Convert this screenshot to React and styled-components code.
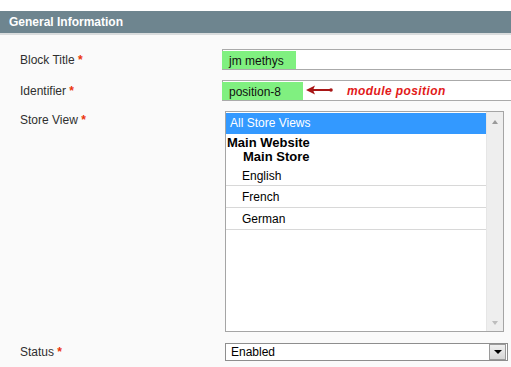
import React from 'react'
import styled, { createGlobalStyle } from 'styled-components'

const GlobalStyle = createGlobalStyle`
    html, body {
        margin:0;
        padding:0;
        background:#fff;
        overflow:hidden;
    }
    body{
        font-family:"Liberation Sans", Arial, sans-serif;
        font-size:12px;
        color:#2f2f2f;
    }
`;

const stores = [
    { name: 'All Store Views', kind: 'selected' },
    { name: 'Main Website', kind: 'website' },
    { name: 'Main Store', kind: 'group' },
    { name: 'English', kind: 'view' },
    { name: 'French', kind: 'view' },
    { name: 'German', kind: 'view' },
]

const Arrow = () => (
    <svg width="34" height="16" viewBox="0 0 34 16">
        <defs>
            <filter id="blur" x="-30%" y="-100%" width="160%" height="300%">
                <feGaussianBlur stdDeviation="1.5" />
            </filter>
        </defs>
        <path d="M8 10 L30 10" stroke="#7a7a7a" strokeWidth="3" opacity="0.55" filter="url(#blur)" />
        <path d="M8 6 L26 6" stroke="#a81616" strokeWidth="2" />
        <path d="M1 6 L10 1.5 L8 6 L10 10.5 Z" fill="#a81616" />
        <circle cx="26" cy="6" r="1.8" fill="#a81616" />
    </svg>
)

const App = () => {
    return (
        <Page>
            <GlobalStyle />
            <Header>General Information</Header>
            <Form>
                <Row>
                    <Label>Block Title <Req>*</Req></Label>
                    <TextInput>
                        <Mark w={74}>jm methys</Mark>
                    </TextInput>
                </Row>
                <Row>
                    <Label>Identifier <Req>*</Req></Label>
                    <TextInput>
                        <Mark w={81}>position-8</Mark>
                        <Note>
                            <Arrow />
                            <span>module position</span>
                        </Note>
                    </TextInput>
                </Row>
                <Row top>
                    <Label>Store View <Req>*</Req></Label>
                    <ListBox>
                        <Options>
                            {stores.map((s) => (
                                <Option key={s.name} kind={s.kind}>{s.name}</Option>
                            ))}
                        </Options>
                        <ScrollBar>
                            <Tri up />
                            <Tri />
                        </ScrollBar>
                    </ListBox>
                </Row>
                <Row>
                    <Label>Status <Req>*</Req></Label>
                    <Select>
                        <span>Enabled</span>
                        <DropBtn><Tri dark /></DropBtn>
                    </Select>
                </Row>
            </Form>
        </Page>
    )
}

export default App

const Page = styled.div`
    padding-top:11px;
    height:356px;
    display:flex;
    flex-direction:column;
`;
const Header = styled.div`
    height:22px;
    line-height:22px;
    background:#6e858f;
    color:#fff;
    font-weight:bold;
    font-size:12px;
    padding-left:9px;
    border-bottom:2px solid #d9dcdd;
`;
const Form = styled.div`
    flex:1;
    background:#fafafa;
    padding-top:14px;
    display:flex;
    flex-direction:column;
    gap:10px;
`;
const Row = styled.div`
    display:flex;
    align-items:${p => p.top ? 'flex-start' : 'center'};
    &:last-child{
        margin-top:1px;
    }
`;
const Label = styled.div`
    width:202px;
    flex-shrink:0;
    padding-left:20px;
    line-height:18px;
    color:#2f2f2f;
`;
const Req = styled.span`
    color:#eb340a;
    font-weight:bold;
`;
const TextInput = styled.div`
    width:300px;
    height:19px;
    flex-shrink:0;
    border:1px solid #aaa;
    border-right:none;
    background:#fff;
    display:flex;
    align-items:stretch;
`;
const Mark = styled.div`
    width:${p => p.w - 7}px;
    background:#80f080;
    padding-left:7px;
    line-height:20px;
    font-size:12px;
    color:#111;
    margin-top:1px;
    margin-left:-1px;
`;
const Note = styled.div`
    display:flex;
    align-items:center;
    gap:8px;
    padding-left:2px;
    color:#e21a1a;
    font-weight:bold;
    font-style:italic;
    font-size:12px;
    letter-spacing:0.4px;
    svg{
        margin-top:3px;
    }
`;
const ListBox = styled.div`
    margin-left:3px;
    width:277px;
    height:219px;
    border:1px solid #a5a5a5;
    background:#fff;
    display:flex;
`;
const Options = styled.div`
    flex:1;
    padding-top:1px;
`;
const Option = styled.div`
    ${p => p.kind === 'selected' && `
        background:#3399ff;
        color:#fff;
        height:21px;
        line-height:21px;
        padding-left:4px;
    `}
    ${p => p.kind === 'website' && `
        font-weight:bold;
        font-size:13px;
        color:#000;
        height:15px;
        line-height:17px;
        padding-left:1px;
    `}
    ${p => p.kind === 'group' && `
        font-weight:bold;
        font-size:13px;
        color:#000;
        height:16px;
        line-height:15px;
        padding-left:17px;
    `}
    ${p => p.kind === 'view' && `
        color:#000;
        height:21px;
        line-height:22px;
        padding-left:16px;
        border-bottom:1px solid #d8d8d8;
    `}
    ${p => p.kind === 'view' && `
        &:nth-child(4){
            height:20px;
            line-height:23px;
        }
    `}
`;
const ScrollBar = styled.div`
    width:16px;
    background:#eeeeee;
    border-left:1px solid #e6e6e6;
    display:flex;
    flex-direction:column;
    justify-content:space-between;
    align-items:center;
    padding:8px 0 6px;
`;
const Tri = styled.div`
    width:0;
    height:0;
    border-left:${p => p.dark ? 4 : 3}px solid transparent;
    border-right:${p => p.dark ? 4 : 3}px solid transparent;
    ${p => p.up
        ? `border-bottom:4px solid #9a9a9a;`
        : `border-top:4px solid ${p.dark ? '#000' : '#bdbdbd'};`}
`;
const Select = styled.div`
    margin-left:3px;
    width:277px;
    height:16px;
    border:1px solid #8e8e8e;
    background:#fff;
    display:flex;
    align-items:center;
    justify-content:space-between;
    padding-left:4px;
    font-size:12px;
    color:#000;
    box-sizing:content-box;
    span{
        padding-left:1px;
    }
`;
const DropBtn = styled.div`
    width:15px;
    height:14px;
    margin-right:1px;
    border:1px solid #9a9a9a;
    background:linear-gradient(#f0f0f0, #d6d6d6);
    display:flex;
    align-items:center;
    justify-content:center;
`;
